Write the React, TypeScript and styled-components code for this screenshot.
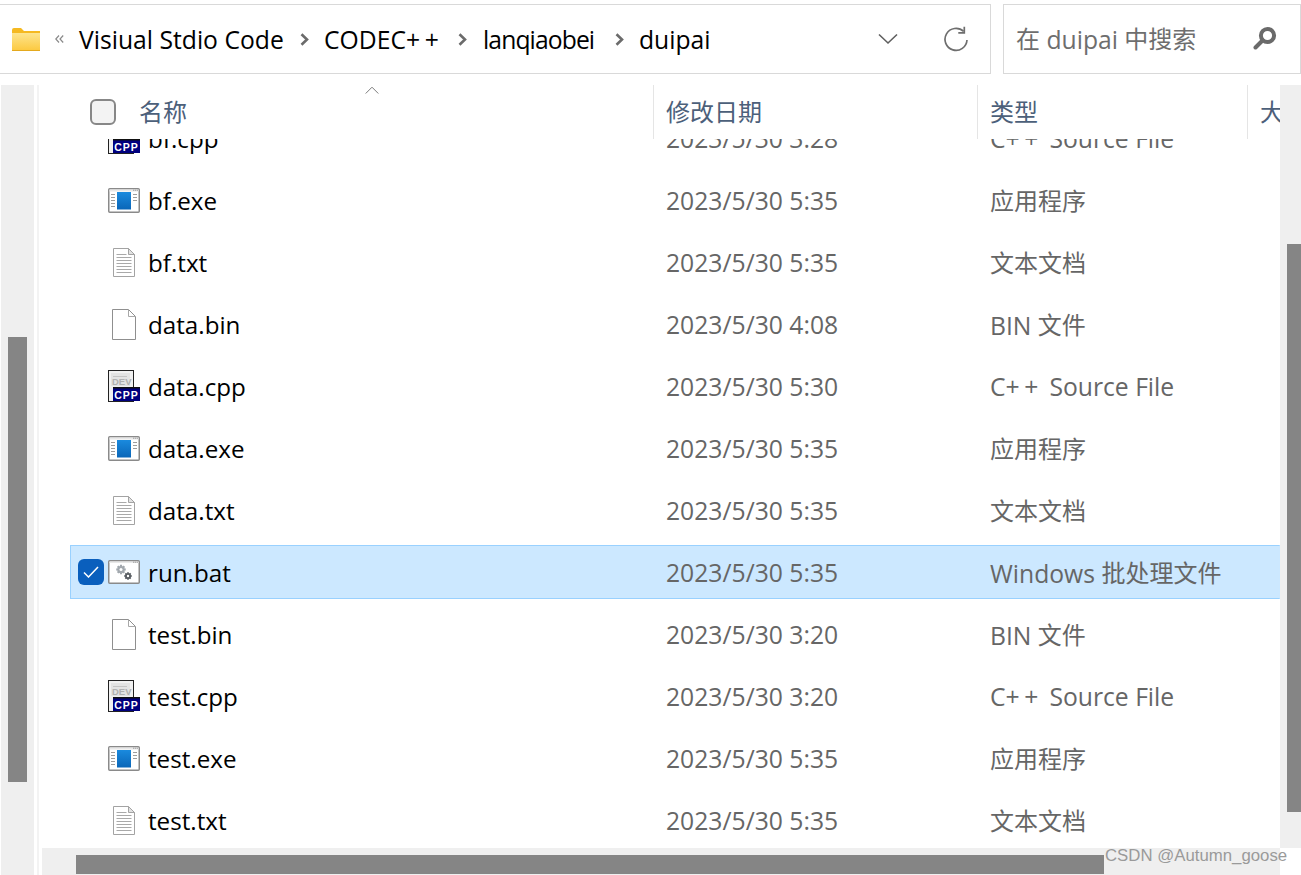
import React from "react";
import styled, { createGlobalStyle } from "styled-components";

const Global = createGlobalStyle`
  html, body { margin: 0; padding: 0; background: #fff; }
  body { font-family: "Open Sans", "Noto Sans CJK SC", sans-serif; }
`;

const Page = styled.div`
  position: relative;
  width: 1301px;
  height: 875px;
  overflow: hidden;
  display: flex;
  flex-direction: column;
  background: #fff;
`;

const TopBar = styled.div`
  height: 85px;
  box-sizing: border-box;
  padding-top: 4px;
  display: flex;
  align-items: flex-start;
  gap: 12px;
`;

const AddressBox = styled.div`
  width: 991px;
  height: 70px;
  box-sizing: border-box;
  border: 1px solid #d9d9d9;
  border-left: none;
  display: flex;
  align-items: center;
  padding-left: 12px;
  color: #000;
  font-size: 24.7px;
`;

const Crumb = styled.span<{ $w: number; $ls?: number }>`
  width: ${(p) => p.$w}px;
  letter-spacing: ${(p) => p.$ls ?? 0}px;
  white-space: nowrap;
  display: inline-block;
`;

const CrumbSep = styled.span<{ $w: number }>`
  width: ${(p) => p.$w}px;
  display: flex;
  justify-content: center;
`;

const Spring = styled.div`
  flex: 1;
`;

const BarIcon = styled.span<{ $w: number }>`
  width: ${(p) => p.$w}px;
  display: flex;
  justify-content: center;
`;

const SearchBox = styled.div`
  width: 298px;
  height: 70px;
  box-sizing: border-box;
  border: 1px solid #d9d9d9;
  display: flex;
  align-items: center;
  justify-content: space-between;
  padding: 0 23px 2px 12px;
  color: #6e6e6e;
  font-size: 24.7px;
`;

const Cjk = styled.span`
  font-size: 24px;
  position: relative;
  top: -1px;
`;

const Plus = styled.span`
  letter-spacing: 4.6px;
`;

const Body = styled.div`
  flex: 1;
  display: flex;
  min-height: 0;
`;

const LeftRail = styled.div`
  width: 33px;
  margin-left: 1px;
  box-sizing: border-box;
  padding: 252px 7px 0;
  background: #efefef;
`;

const VThumb = styled.div<{ $h: number }>`
  width: 19px;
  height: ${(p) => p.$h}px;
  background: #858585;
`;

const RailEdge = styled.div`
  width: 2px;
  margin-left: 3px;
  background: #f3f3f3;
`;

const Content = styled.div`
  flex: 1;
  display: flex;
  flex-direction: column;
  min-width: 0;
`;

const Upper = styled.div`
  height: 763px;
  display: flex;
`;

const Main = styled.div`
  width: 1241px;
  display: flex;
  flex-direction: column;
  overflow: hidden;
`;

const Header = styled.div`
  position: relative;
  z-index: 1;
  height: 54px;
  flex: none;
  display: grid;
  grid-template-columns: 614px 324px 270px 33px;
  background: #fff;
  color: #4c607a;
  font-size: 24px;
`;

const NameHead = styled.div`
  display: flex;
  align-items: center;
  gap: 23px;
  padding-left: 51px;
`;

const HeadText = styled.span`
  position: relative;
  top: -2px;
`;

const HeadCell = styled.div`
  border-left: 1px solid #e5e5e5;
  display: flex;
  align-items: center;
  padding-left: 12px;
  white-space: nowrap;
  overflow: hidden;
`;

const HeadCheck = styled.span`
  width: 26px;
  height: 26px;
  box-sizing: border-box;
  border: 2px solid #878787;
  border-radius: 6px;
  background: #f3f3f3;
`;

const SortCaret = styled.svg`
  position: absolute;
  left: 326px;
  top: 0;
`;

const List = styled.div`
  flex: 1;
  min-height: 0;
  overflow: hidden;
  padding-left: 31px;
`;

const Rows = styled.div`
  margin-top: -28px;
  display: flex;
  flex-direction: column;
  gap: 8px;
`;

const Row = styled.div<{ $selected?: boolean }>`
  height: 54px;
  box-sizing: border-box;
  display: grid;
  grid-template-columns: 37px 40px 518px 324px 1fr;
  align-items: center;
  border: 1px solid ${(p) => (p.$selected ? "#99d1ff" : "transparent")};
  border-right-color: ${(p) => (p.$selected ? "#cce8ff" : "transparent")};
  background: ${(p) => (p.$selected ? "#cce8ff" : "transparent")};
  font-size: 24.7px;
`;

const CheckSlot = styled.div`
  display: flex;
  padding-left: 7px;
`;

const RowCheck = styled.span`
  width: 26px;
  height: 26px;
  border-radius: 6px;
  background: #0a5fbd;
  display: flex;
  align-items: center;
  justify-content: center;
`;

const IconSlot = styled.div`
  width: 32px;
  height: 34px;
  display: flex;
  align-items: center;
  justify-content: center;
`;

const FileName = styled.div`
  color: #000;
  font-size: 24.2px;
  white-space: nowrap;
`;

const Meta = styled.div`
  color: #666;
  white-space: nowrap;
`;

const RightRail = styled.div`
  width: 21px;
  box-sizing: border-box;
  padding: 159px 0 0 7px;
  background: #efefef;
`;

const RThumb = styled.div`
  width: 14px;
  height: 568px;
  background: #858585;
`;

const BottomBar = styled.div`
  width: 1238px;
  margin-left: 3px;
  height: 27px;
  box-sizing: border-box;
  padding: 7px 0 0 34px;
  background: #efefef;
`;

const HThumb = styled.div`
  width: 1028px;
  height: 19px;
  background: #858585;
`;

const Watermark = styled.div`
  position: absolute;
  left: 1105px;
  top: 845px;
  font-family: "Liberation Sans", sans-serif;
  font-size: 16.8px;
  line-height: 22px;
  color: #9a9a9a;
  white-space: nowrap;
`;

const FolderIcon = () => (
  <svg width="28" height="23" viewBox="0 0 28 23">
    <defs>
      <linearGradient id="fg" x1="0" y1="0" x2="0" y2="1">
        <stop offset="0" stopColor="#fde58e" />
        <stop offset="1" stopColor="#fcc83d" />
      </linearGradient>
    </defs>
    <path d="M0 2q0-2 2-2h7l3 3h16v3H0z" fill="#f5b921" />
    <path d="M0 5h28v18H1q-1 0-1-1z" fill="url(#fg)" />
    <path d="M0 22.5h28" stroke="#e4a91e" strokeWidth="1" />
  </svg>
);

const DoubleChevron = () => (
  <svg width="9" height="8" viewBox="0 0 9 8" fill="none" stroke="#8a8a8a" strokeWidth="1.2">
    <path d="M4 .5 .8 4 4 7.5M8.2 .5 5 4l3.2 3.5" />
  </svg>
);

const Chevron = () => (
  <svg width="9" height="13" viewBox="0 0 9 13" fill="none" stroke="#6b6b6b" strokeWidth="2.6">
    <path d="M1.5 1.2 7 6.5l-5.5 5.3" />
  </svg>
);

const DownChevron = () => (
  <svg width="20" height="12" viewBox="0 0 20 12" fill="none" stroke="#5f5f5f" strokeWidth="1.6">
    <path d="M1 1.5 10 10l9-8.5" />
  </svg>
);

const Refresh = () => (
  <svg width="26" height="26" viewBox="0 0 26 26" fill="none" stroke="#6e6e6e" strokeWidth="1.7">
    <path d="M20.6 5.4A11 11 0 1 0 24 14" />
    <path d="M21.3 .8v6h-6" />
  </svg>
);

const Magnifier = () => (
  <svg width="24" height="24" viewBox="0 0 24 24" fill="none" stroke="#6a6a6a">
    <circle cx="14.5" cy="9.5" r="6.6" strokeWidth="4" />
    <path d="M9.5 14.5 2.5 21.5" strokeWidth="4" strokeLinecap="round" />
  </svg>
);

const ExeIcon = () => (
  <svg width="32" height="25" viewBox="0 0 32 25">
    <defs>
      <linearGradient id="eg" x1="0" y1="0" x2="0" y2="1">
        <stop offset="0" stopColor="#1a8ade" />
        <stop offset="1" stopColor="#0a66b8" />
      </linearGradient>
    </defs>
    <rect x=".75" y=".75" width="30.5" height="23.5" rx="1" fill="#fff" stroke="#8a8a8a" strokeWidth="1.5" />
    <rect x="1.5" y="1.5" width="29" height="2" fill="#e8e8e8" />
    <rect x="9" y="4" width="14" height="17.5" fill="url(#eg)" />
    <path d="M3 6.5h4M3 9.5h4M3 12.5h4M3 15.5h4M3 18.5h4M25 6.5h4M25 9.5h4M25 12.5h4" stroke="#9d9d9d" strokeWidth="1" />
    <path d="M25 2.2h1.4M27 2.2h1.4M29 2.2h1" stroke="#9a9a9a" strokeWidth="1" />
  </svg>
);

const CppIcon = () => (
  <svg width="32" height="32" viewBox="0 0 32 32">
    <rect x=".5" y=".5" width="25" height="31" fill="#f1f1f1" stroke="#222" strokeWidth="1" />
    <rect x="3" y="3" width="19" height="13" fill="#e3e3e3" />
    <path d="M5 6.5h14" stroke="#c4c4c4" strokeWidth="1" />
    <text x="4" y="15" fontFamily="Liberation Sans, sans-serif" fontSize="9.5" fontWeight="700" fill="#b0b0b0">DEV</text>
    <rect x="5" y="17" width="27" height="14" fill="#00007e" />
    <rect x="5" y="17" width="27" height="1.5" fill="#111" />
    <text x="18.5" y="29" textAnchor="middle" fontFamily="Liberation Sans, sans-serif" fontSize="10.5" fontWeight="700" letterSpacing="1" fill="#fff">CPP</text>
  </svg>
);

const TxtIcon = () => (
  <svg width="22" height="29" viewBox="0 0 22 29">
    <path d="M.5.5h15l6 6v22H.5z" fill="#fff" stroke="#a3a3a3" />
    <path d="M15.5.5v6h6z" fill="#e2e2e2" stroke="#a3a3a3" />
    <path d="M3.5 6.5h10M3.5 9.5h15M3.5 12.5h15M3.5 15.5h15M3.5 18.5h15M3.5 21.5h15M3.5 24.5h15" stroke="#a9a9a9" strokeWidth="1" />
  </svg>
);

const BinIcon = () => (
  <svg width="24" height="31" viewBox="0 0 24 31">
    <path d="M.5.5h16l7 7v23H.5z" fill="#fff" stroke="#8f8f8f" />
    <path d="M16.5.5v7h7" fill="none" stroke="#a8a8a8" />
  </svg>
);

const Gear = ({ cx, cy, r, fill }: { cx: number; cy: number; r: number; fill: string }) => (
  <g>
    {[0, 45, 90, 135].map((a) => (
      <rect
        key={a}
        x={cx - r * 0.28}
        y={cy - r * 1.25}
        width={r * 0.56}
        height={r * 2.5}
        fill={fill}
        transform={`rotate(${a} ${cx} ${cy})`}
      />
    ))}
    <circle cx={cx} cy={cy} r={r * 0.95} fill={fill} />
    <circle cx={cx} cy={cy} r={r * 0.4} fill="#fff" />
  </g>
);

const BatIcon = () => (
  <svg width="32" height="24" viewBox="0 0 32 24">
    <rect x=".75" y=".75" width="30.5" height="22.5" rx="1" fill="#fff" stroke="#8a8a8a" strokeWidth="1.5" />
    <rect x="1.5" y="1.5" width="29" height="1.5" fill="#e8e8e8" />
    <path d="M25 2.2h1.4M27 2.2h1.4M29 2.2h1" stroke="#9a9a9a" strokeWidth="1" />
    <Gear cx={13} cy={9.5} r={3.8} fill="#a2a8ae" />
    <Gear cx={20} cy={16} r={3} fill="#565b60" />
  </svg>
);

const CheckMark = () => (
  <svg width="16" height="12" viewBox="0 0 16 12" fill="none" stroke="#fff" strokeWidth="1.5">
    <path d="M1 6.5 5.5 11 15 1" />
  </svg>
);

type Kind = "cpp" | "exe" | "txt" | "bin" | "bat";

const icons: Record<Kind, React.ReactNode> = {
  cpp: <CppIcon />,
  exe: <ExeIcon />,
  txt: <TxtIcon />,
  bin: <BinIcon />,
  bat: <BatIcon />,
};

const typeLabels: Record<Kind, React.ReactNode> = {
  cpp: <>C<Plus>++</Plus> Source File</>,
  exe: <Cjk>应用程序</Cjk>,
  txt: <Cjk>文本文档</Cjk>,
  bin: <>BIN <Cjk>文件</Cjk></>,
  bat: <>Windows <Cjk>批处理文件</Cjk></>,
};

const files: { name: string; date: string; kind: Kind; selected?: boolean }[] = [
  { name: "bf.cpp", date: "2023/5/30 3:28", kind: "cpp" },
  { name: "bf.exe", date: "2023/5/30 5:35", kind: "exe" },
  { name: "bf.txt", date: "2023/5/30 5:35", kind: "txt" },
  { name: "data.bin", date: "2023/5/30 4:08", kind: "bin" },
  { name: "data.cpp", date: "2023/5/30 5:30", kind: "cpp" },
  { name: "data.exe", date: "2023/5/30 5:35", kind: "exe" },
  { name: "data.txt", date: "2023/5/30 5:35", kind: "txt" },
  { name: "run.bat", date: "2023/5/30 5:35", kind: "bat", selected: true },
  { name: "test.bin", date: "2023/5/30 3:20", kind: "bin" },
  { name: "test.cpp", date: "2023/5/30 3:20", kind: "cpp" },
  { name: "test.exe", date: "2023/5/30 5:35", kind: "exe" },
  { name: "test.txt", date: "2023/5/30 5:35", kind: "txt" },
];

export default function App() {
  return (
    <Page>
      <Global />
      <TopBar>
        <AddressBox>
          <BarIcon $w={28}><FolderIcon /></BarIcon>
          <BarIcon $w={39}><DoubleChevron /></BarIcon>
          <Crumb $w={205}>Visiual Stdio Code</Crumb>
          <CrumbSep $w={40}><Chevron /></CrumbSep>
          <Crumb $w={118}>CODEC<Plus>++</Plus></Crumb>
          <CrumbSep $w={41}><Chevron /></CrumbSep>
          <Crumb $w={116} $ls={-0.9}>lanqiaobei</Crumb>
          <CrumbSep $w={40}><Chevron /></CrumbSep>
          <Crumb $w={70}>duipai</Crumb>
          <Spring />
          <BarIcon $w={68}><DownChevron /></BarIcon>
          <BarIcon $w={68}><Refresh /></BarIcon>
        </AddressBox>
        <SearchBox>
          <span><Cjk>在</Cjk> duipai <Cjk>中搜索</Cjk></span>
          <Magnifier />
        </SearchBox>
      </TopBar>
      <Body>
        <LeftRail><VThumb $h={445} /></LeftRail>
        <RailEdge />
        <Content>
          <Upper>
            <Main>
              <Header>
                <NameHead><HeadCheck /><HeadText>名称</HeadText></NameHead>
                <HeadCell><HeadText>修改日期</HeadText></HeadCell>
                <HeadCell><HeadText>类型</HeadText></HeadCell>
                <HeadCell><HeadText>大小</HeadText></HeadCell>
                <SortCaret width="14" height="10" viewBox="0 0 14 10" fill="none" stroke="#7a7a7a" strokeWidth="1">
                  <path d="M.7 8.5 7 2.2l6.3 6.3" />
                </SortCaret>
              </Header>
              <List>
                <Rows>
                  {files.map((f) => (
                    <Row key={f.name} $selected={f.selected}>
                      <CheckSlot>{f.selected && <RowCheck><CheckMark /></RowCheck>}</CheckSlot>
                      <IconSlot>{icons[f.kind]}</IconSlot>
                      <FileName>{f.name}</FileName>
                      <Meta>{f.date}</Meta>
                      <Meta>{typeLabels[f.kind]}</Meta>
                    </Row>
                  ))}
                </Rows>
              </List>
            </Main>
            <RightRail><RThumb /></RightRail>
          </Upper>
          <BottomBar><HThumb /></BottomBar>
        </Content>
      </Body>
      <Watermark>CSDN @Autumn_goose</Watermark>
    </Page>
  );
}
